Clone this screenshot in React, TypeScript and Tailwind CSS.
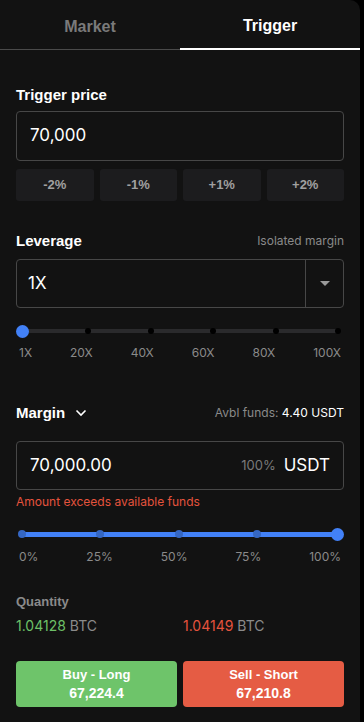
import React from "react";

const sans = { fontFamily: "Inter, 'Liberation Sans', sans-serif" };
const arial = { fontFamily: "'Liberation Sans', Arial, sans-serif" };

function LeverageSlider() {
  const marks = ["1X", "20X", "40X", "60X", "80X", "100X"];
  return (
    <div className="mt-[17px]">
      <div className="relative h-[12px] mx-[6px]">
        <div className="absolute left-0 right-0 top-[4px] h-[4px] rounded-full bg-[#2a2a2c]" />
        <div className="absolute inset-0 flex items-center justify-between">
          {marks.map((m, i) =>
            i === 0 ? (
              <div key={m} className="-ml-[6px] h-[13px] w-[13px] rounded-full bg-[#4281f7]" />
            ) : (
              <div key={m} className={`h-[6px] w-[6px] rounded-full bg-black ${i === marks.length - 1 ? "-mr-[3px]" : ""}`} />
            )
          )}
        </div>
      </div>
      <div className="mt-[8px] flex justify-between px-[3px] text-[12px] leading-[16px] text-[#8a8a8a]" style={sans}>
        {marks.map((m) => (
          <span key={m}>{m}</span>
        ))}
      </div>
    </div>
  );
}

function PercentSlider() {
  const marks = ["0%", "25%", "50%", "75%", "100%"];
  return (
    <div className="mt-[18px]">
      <div className="relative h-[12px] mx-[6px]">
        <div className="absolute left-0 right-0 top-[4px] h-[5px] rounded-full bg-[#4281f7]" />
        <div className="absolute inset-0 flex items-center justify-between">
          {marks.map((m, i) =>
            i === marks.length - 1 ? (
              <div key={m} className="-mr-[6px] h-[13px] w-[13px] rounded-full bg-[#4281f7]" />
            ) : (
              <div key={m} className={`h-[8px] w-[8px] rounded-full bg-[#3567c4] ${i === 0 ? "-ml-[4px]" : ""}`} />
            )
          )}
        </div>
      </div>
      <div className="mt-[9px] flex justify-between px-[3px] text-[12px] leading-[16px] text-[#8a8a8a]" style={sans}>
        {marks.map((m) => (
          <span key={m}>{m}</span>
        ))}
      </div>
    </div>
  );
}

export default function App() {
  return (
    <div className="min-h-[722px] w-[364px] bg-black">
      <div className="min-h-[722px] w-[360px] rounded-tr-[10px] bg-[#121212] text-white">
        {/* tabs */}
        <div className="flex h-[50px]" style={arial}>
          <div className="flex flex-1 items-center justify-center border-b border-[#4a4a4a] pt-[4px] text-[16px] font-bold text-[#7a7a7a]">
            Market
          </div>
          <div className="flex flex-1 items-center justify-center border-b-2 border-white pt-[4px] text-[16px] font-bold text-white">
            Trigger
          </div>
        </div>

        <div className="px-[16px]">
          <div className="mt-[36px] text-[15px] font-bold leading-[18px]" style={arial}>
            Trigger price
          </div>
          <div className="mt-[7px] flex h-[50px] items-center rounded-[4px] border border-[#474747] px-[13px] text-[17px]" style={sans}>
            70,000
          </div>
          <div className="mt-[8px] grid grid-cols-4 gap-[6px]" style={arial}>
            {["-2%", "-1%", "+1%", "+2%"].map((p) => (
              <div key={p} className="flex h-[32px] items-center justify-center rounded-[3px] bg-[#1c1c1e] text-[13px] font-bold text-[#a0a0a0]">
                {p}
              </div>
            ))}
          </div>

          <div className="mt-[31px] flex h-[18px] items-center justify-between">
            <span className="text-[15px] font-bold leading-[18px]" style={arial}>Leverage</span>
            <span className="text-[12px] leading-[14px] text-[#8a8a8a]" style={sans}>Isolated margin</span>
          </div>
          <div className="mt-[9px] flex h-[49px] rounded-[4px] border border-[#474747]" style={sans}>
            <div className="flex flex-1 items-center pl-[11px] text-[17px]">1X</div>
            <div className="flex w-[38px] items-center justify-center border-l border-[#474747]">
              <svg width="10" height="6" viewBox="0 0 10 6">
                <path d="M0 0 L10 0 L5 5 Z" fill="#9a9a9a" />
              </svg>
            </div>
          </div>

          <LeverageSlider />

          <div className="mt-[43px] flex h-[18px] items-center justify-between">
            <span className="flex items-center gap-[10px] text-[15px] font-bold leading-[18px]" style={arial}>
              Margin
              <svg width="12" height="8" viewBox="0 0 12 8">
                <path d="M1.5 1.5 L6 6 L10.5 1.5" fill="none" stroke="white" strokeWidth="1.6" />
              </svg>
            </span>
            <span className="text-[12px] leading-[14px] text-[#8a8a8a]" style={sans}>
              Avbl funds: <span className="text-white">4.40 USDT</span>
            </span>
          </div>
          <div className="mt-[19px] flex h-[49px] items-center rounded-[4px] border border-[#474747] px-[13px]" style={sans}>
            <span className="flex-1 text-[17px]">70,000.00</span>
            <span className="mr-[8px] text-[13px] text-[#7a7a7a]">100%</span>
            <span className="text-[17px]">USDT</span>
          </div>
          <div className="mt-[4px] text-[12px] leading-[16px] text-[#e5533d]" style={sans}>
            Amount exceeds available funds
          </div>

          <PercentSlider />

          <div className="mt-[29px] text-[13px] font-bold leading-[16px] text-[#8a8a8a]" style={arial}>
            Quantity
          </div>
          <div className="mt-[7px] grid grid-cols-2 gap-[6px] text-[14px] leading-[18px]" style={sans}>
            <div>
              <span className="text-[#6dc067]">1.04128</span> <span className="text-[#8a8a8a]">BTC</span>
            </div>
            <div>
              <span className="text-[#e5533d]">1.04149</span> <span className="text-[#8a8a8a]">BTC</span>
            </div>
          </div>

          <div className="mt-[26px] grid grid-cols-2 gap-[6px]" style={arial}>
            <div className="flex h-[46px] flex-col items-center justify-center rounded-[4px] bg-[#6ec46a] text-[13px] font-bold leading-[18px] text-white">
              <span>Buy - Long</span>
              <span className="text-[14px]">67,224.4</span>
            </div>
            <div className="flex h-[46px] flex-col items-center justify-center rounded-[4px] bg-[#e55c44] text-[13px] font-bold leading-[18px] text-white">
              <span>Sell - Short</span>
              <span className="text-[14px]">67,210.8</span>
            </div>
          </div>
        </div>
      </div>
    </div>
  );
}
